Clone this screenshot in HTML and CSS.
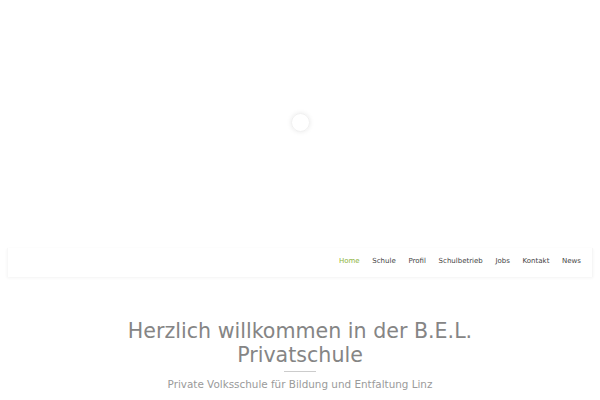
FILE: index.html
```html
<!DOCTYPE html>
<html lang="de">
<head>
<meta charset="utf-8">
<title>B.E.L. Privatschule</title>
<link rel="stylesheet" href="styles.css">
</head>
<body>
<div class="hero">
  <div class="spinner"></div>
</div>
<header class="navbar">
  <nav class="menu">
    <a class="item active" href="#">Home</a>
    <a class="item" href="#">Schule</a>
    <a class="item" href="#">Profil</a>
    <a class="item" href="#">Schulbetrieb</a>
    <a class="item" href="#">Jobs</a>
    <a class="item" href="#">Kontakt</a>
    <a class="item" href="#">News</a>
  </nav>
</header>
<section class="intro">
  <h1 class="title">Herzlich willkommen in der B.E.L. Privatschule</h1>
  <div class="divider"></div>
  <p class="subtitle">Private Volksschule für Bildung und Entfaltung Linz</p>
</section>
</body>
</html>
```
FILE: styles.css
```css
html, body {
  margin: 0;
  padding: 0;
  background: #fff;
  font-family: "DejaVu Sans", Verdana, sans-serif;
}
.hero {
  height: 248px;
  display: flex;
  align-items: center;
  justify-content: center;
}
.spinner {
  width: 17px;
  height: 17px;
  border-radius: 50%;
  border: 1px solid #f0f0f0;
  box-shadow: 0 0 5px rgba(0,0,0,0.09);
  margin-top: -4px;
}
.navbar {
  margin: 0 7px 0 7px;
  height: 29px;
  display: flex;
  justify-content: flex-end;
  align-items: center;
  box-shadow: 0 1px 3px rgba(0,0,0,0.05);
  border-right: 1px solid #f6f6f6;
  border-left: 1px solid #f8f8f8;
}
.menu {
  display: flex;
  gap: 12.7px;
  padding-right: 11px;
  margin-top: -3px;
}
.item {
  font-size: 7px;
  color: #444;
  text-decoration: none;
}
.item.active {
  color: #8db33b;
}
.intro {
  padding-top: 42px;
  text-align: center;
}
.title {
  margin: 0 auto;
  width: 380px;
  font-weight: normal;
  font-size: 20.6px;
  line-height: 24px;
  color: #858585;
}
.divider {
  width: 32px;
  height: 1px;
  background: #ccc;
  margin: 4px auto 0;
}
.subtitle {
  margin: 6px 0 0;
  font-size: 10.4px;
  color: #9a9a9a;
}
```
